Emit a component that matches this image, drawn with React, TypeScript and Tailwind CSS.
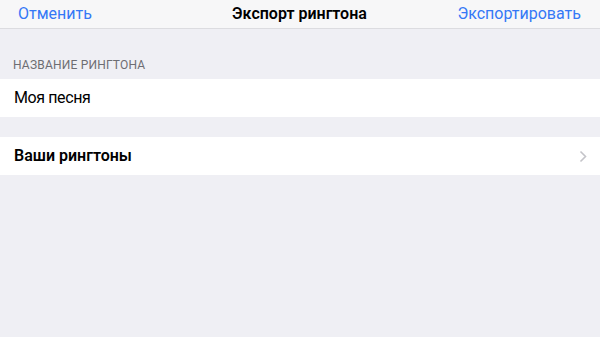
import React from "react";

export default function App() {
  return (
    <div
      className="w-[600px] h-[337px] bg-[#efeff4] flex flex-col overflow-hidden"
      style={{ fontFamily: '"Roboto", "Liberation Sans", sans-serif' }}
    >
      <div className="h-[29px] bg-[#f7f7f8] border-b border-[#dcdce0] flex items-center justify-between pl-[18px] pr-[19px] text-[16px]">
        <span className="text-[#3478f6] w-[150px]">Отменить</span>
        <span className="font-semibold text-black">Экспорт рингтона</span>
        <span className="text-[#3478f6] w-[150px] text-right">Экспортировать</span>
      </div>
      <div className="h-[26px]" />
      <div className="h-[24px] px-[13px] pt-[2px] text-[12px] leading-[16px] text-[#6d6d72] tracking-[0.2px]">
        НАЗВАНИЕ РИНГТОНА
      </div>
      <div className="h-[38px] bg-white px-[14px] flex items-center text-[16px] tracking-[-0.4px] text-black">
        Моя песня
      </div>
      <div className="h-[20px]" />
      <div className="h-[38px] bg-white pl-[14px] pr-[13px] flex items-center justify-between text-[16px] text-black">
        <span className="font-semibold">Ваши рингтоны</span>
        <svg width="8" height="13" viewBox="0 0 8 13" fill="none">
          <path d="M1.5 1.5 L6.5 6.5 L1.5 11.5" stroke="#c4c4c9" strokeWidth="1.6" />
        </svg>
      </div>
    </div>
  );
}
